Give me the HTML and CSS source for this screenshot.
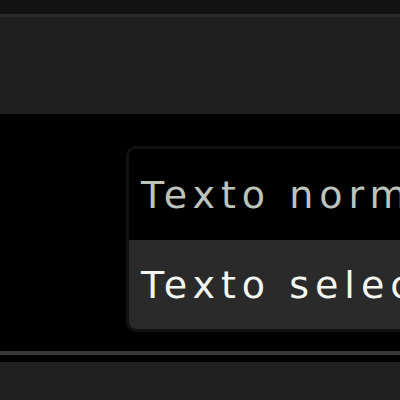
FILE: index.html
```html
<!DOCTYPE html>
<html>
<head>
<meta charset="utf-8">
<link rel="stylesheet" href="styles.css">
</head>
<body>
<div class="topbar"></div>
<div class="topline"></div>
<div class="panel"></div>
<div class="stage">
  <div class="list">
    <div class="row normal">Texto normal</div>
    <div class="row selected">Texto seleccionado</div>
  </div>
</div>
<div class="sep"></div>
<div class="gap"></div>
<div class="footer"></div>
</body>
</html>
```
FILE: styles.css
```css
html, body {
  margin: 0;
  padding: 0;
  background: #000;
  overflow: hidden;
  width: 400px;
  height: 400px;
}
.topbar { height: 14px; background: #121212; }
.topline { height: 3px; background: #2a2a2a; }
.panel { height: 97px; background: #1e1e1e; }
.stage {
  height: 237px;
  background: #000;
  box-sizing: border-box;
  padding: 32px 0 0 126px;
  overflow: hidden;
}
.list {
  width: 400px;
  border: 3px solid #111;
  border-radius: 10px;
  overflow: hidden;
  background: #000;
}
.row {
  display: flex;
  align-items: center;
  padding-left: 12px;
  font-family: "DejaVu Sans", sans-serif;
  font-size: 38px;
  letter-spacing: 6px;
  white-space: nowrap;
}
.normal { height: 91px; background: #000; color: #bcc4bc; }
.selected { height: 89px; background: #2a2a2a; color: #f4f6f0; }
.sep { height: 4px; background: #383838; }
.gap { height: 7px; background: #000; }
.footer { height: 38px; background: #202020; }
```
